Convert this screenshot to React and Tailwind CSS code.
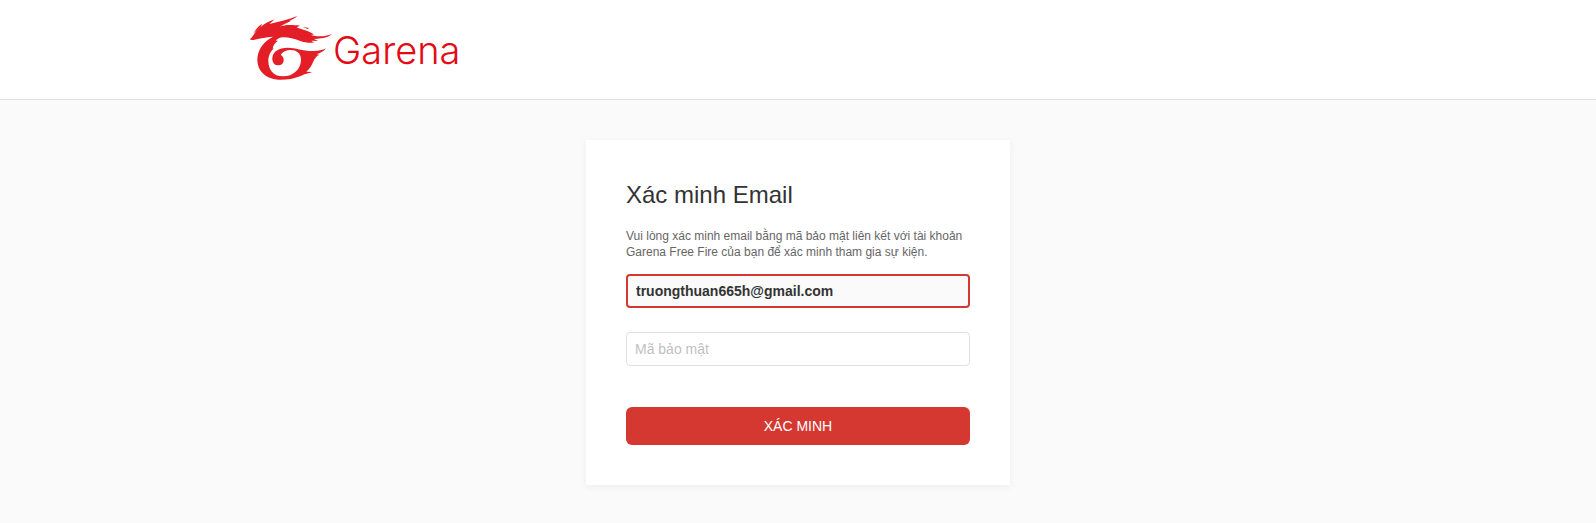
import { useState } from "react";

function GarenaLogo() {
  return (
    <a href="#" className="flex items-center" aria-label="Garena">
      <svg width="85" height="65" viewBox="24 24 255 195" fill="#e31e26" aria-hidden="true">
        <path d="M29 94 C35 90 38 84 43 77 C54 62 72 45 104 34 L88 48 C116 41 146 35 172 24 C166 31 156 34 148 38 L154 38 C142 44 128 50 118 57 C132 51 150 50 180 53 L170 58 C188 67 208 68 222 80 L212 80 C229 87 253 87 276 78 C264 89 248 91 232 92 L222 93 L234 99 L214 98 L222 104 C206 105 192 103 179 98 C160 91 144 87 126 88 C117 89 112 93 107 98 L114 98 C105 104 99 112 98 122 L103 121 C92 129 85 143 85 158 C85 184 99 205 129 205 C160 205 183 183 183 155 C183 136 170 126 152 126 C139 126 128 131 122 140 C128 144 132 150 131 158 C130 167 122 173 113 172 C102 171 96 161 97 149 C99 130 117 119 143 119 C167 119 188 129 215 129 C231 130 247 127 258 121 C251 131 240 135 230 139 L238 140 C228 145 225 151 221 158 C216 170 210 182 199 191 L217 192 C205 197 193 198 184 203 C160 213 137 216 114 215 C76 212 51 187 52 153 C53 126 70 100 99 86 C79 87 60 91 44 95 C39 96 34 97 29 94 Z" />
        <path d="M40 76 C50 61 58 51 67 48 C62 57 54 66 40 76 Z" />
        <path d="M188 57 L207 60 L203 63 Z" />
      </svg>
      <span className="pt-0.5 font-[Inter,sans-serif] text-[38px] leading-10 font-light text-[#e50914]">
        Garena
      </span>
    </a>
  );
}

export default function App() {
  const [email, setEmail] = useState("truongthuan665h@gmail.com");
  const [code, setCode] = useState("");

  const handleSubmit = (e) => {
    e.preventDefault();
  };

  return (
    <div className="min-h-screen bg-[#fafafa] font-['Liberation_Sans',Arial,sans-serif]">
      <header className="bg-white border-b border-[#e0e0e0]">
        <div className="max-w-[1100px] mx-auto pt-4 pb-[18px]">
          <GarenaLogo />
        </div>
      </header>

      <main className="pt-10 pb-[38px]">
        <form
          onSubmit={handleSubmit}
          className="max-w-[424px] mx-auto p-10 bg-white shadow-[0_2px_8px_rgba(0,0,0,0.05)]"
        >
          <h1 className="text-2xl leading-[30px] text-[#333]">Xác minh Email</h1>
          <p className="mt-[18px] text-xs leading-4 text-[#666]">
            Vui lòng xác minh email bằng mã bảo mật liên kết với tài khoản Garena Free Fire của bạn
            để xác minh tham gia sự kiện.
          </p>
          <input
            type="email"
            aria-label="Email"
            value={email}
            onChange={(e) => setEmail(e.target.value)}
            className="block w-full h-[34px] mt-[14px] px-2 rounded border-2 border-[#d43831] bg-[#fafafa] text-sm font-bold text-[#333] outline-none"
          />
          <input
            type="text"
            aria-label="Mã bảo mật"
            placeholder="Mã bảo mật"
            value={code}
            onChange={(e) => setCode(e.target.value)}
            className="block w-full h-[34px] mt-6 px-2 rounded border border-[#e0e0e0] bg-white text-sm text-[#333] placeholder:text-[#bfbfbf] outline-none"
          />
          <button
            type="submit"
            className="block w-full h-[38px] mt-[41px] rounded-md bg-[#d43831] text-sm text-white cursor-pointer"
          >
            XÁC MINH
          </button>
        </form>
      </main>
    </div>
  );
}
